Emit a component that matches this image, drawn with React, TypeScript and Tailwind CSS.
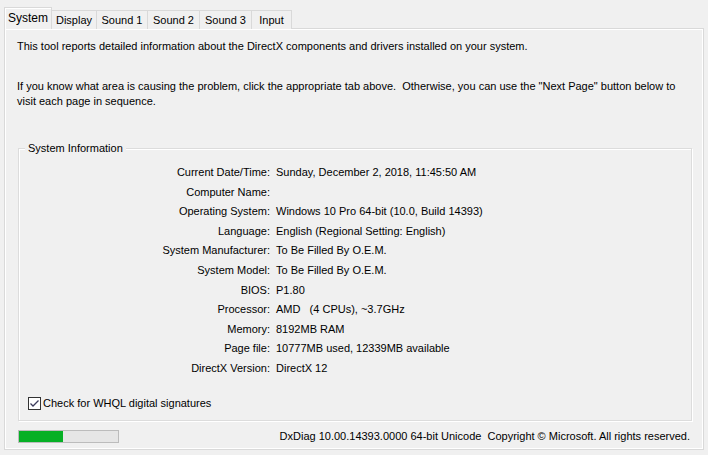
import React from "react";

const tabs: [string, string][] = [
  ["System", "w-[48px]"],
  ["Display", "w-[45px]"],
  ["Sound 1", "w-[51px]"],
  ["Sound 2", "w-[52px]"],
  ["Sound 3", "w-[52px]"],
  ["Input", "w-[40px]"],
];

const rows: [string, string][] = [
  ["Current Date/Time:", "Sunday, December 2, 2018, 11:45:50 AM"],
  ["Computer Name:", ""],
  ["Operating System:", "Windows 10 Pro 64-bit (10.0, Build 14393)"],
  ["Language:", "English (Regional Setting: English)"],
  ["System Manufacturer:", "To Be Filled By O.E.M."],
  ["System Model:", "To Be Filled By O.E.M."],
  ["BIOS:", "P1.80"],
  ["Processor:", "AMD   (4 CPUs), ~3.7GHz"],
  ["Memory:", "8192MB RAM"],
  ["Page file:", "10777MB used, 12339MB available"],
  ["DirectX Version:", "DirectX 12"],
];

const App = () => {
  return (
    <div
      className="w-[708px] h-[455px] bg-[#f0f0f0] text-black text-[11px] leading-[15px] pt-[7px] px-[4px] overflow-hidden"
      style={{ fontFamily: '"Liberation Sans", Arial, sans-serif' }}
    >
      {/* tab strip */}
      <div className="relative z-10 flex items-end h-[22px] -mb-px">
        {tabs.map(([t, w], i) =>
          i === 0 ? (
            <div
              key={t}
              className={`${w} h-[22px] border border-b-0 border-[#d9d9d9] bg-[#f0f0f0] shadow-[inset_1px_1px_0_#fff] flex items-center justify-center text-[12px] pb-[1px]`}
            >
              {t}
            </div>
          ) : (
            <div
              key={t}
              className={`${w} h-[19px] border border-l-0 border-b-0 border-[#d9d9d9] bg-[#f0f0f0] flex items-center justify-center`}
            >
              {t}
            </div>
          )
        )}
      </div>

      {/* panel */}
      <div className="h-[422px] border border-[#d9d9d9] shadow-[inset_1px_1px_0_#fff,inset_-1px_-1px_0_#fff] pt-[10px]">
        <p className="pl-[12px]">
          This tool reports detailed information about the DirectX components and drivers installed on your system.
        </p>
        <p className="pl-[12px] pr-[20px] mt-[25px]">
          If you know what area is causing the problem, click the appropriate tab above.&nbsp; Otherwise, you can use the "Next Page" button below to visit each page in sequence.
        </p>

        {/* group box */}
        <div className="relative ml-[13px] mr-[11px] mt-[39px] h-[273px] border border-[#dcdcdc] shadow-[inset_1px_1px_0_#fff,1px_1px_0_#fff] pt-[14px]">
          <span className="absolute left-[6px] top-[-8px] bg-[#f0f0f0] px-[3px]">System Information</span>
          <div className="grid grid-cols-[251px_1fr] gap-x-[6px]">
            {rows.map(([k, v]) => (
              <React.Fragment key={k}>
                <div className="text-right leading-[19.6px] whitespace-nowrap">{k}</div>
                <div className="leading-[19.6px] whitespace-pre">{v}</div>
              </React.Fragment>
            ))}
          </div>
          <label className="flex items-center gap-[2px] ml-[9px] mt-[17px]">
            <span className="w-[13px] h-[13px] border border-[#333] bg-white flex items-center justify-center">
              <svg width="11" height="11" viewBox="0 0 11 11">
                <path d="M1.5 5.5 L4 8 L9.5 2.5" fill="none" stroke="#3b3b5c" strokeWidth="1.3" />
              </svg>
            </span>
            <span>Check for WHQL digital signatures</span>
          </label>
        </div>

        {/* footer */}
        <div className="flex items-center justify-between ml-[13px] mr-[13px] mt-[8px]">
          <div className="w-[101px] h-[13px] border border-[#bcbcbc] bg-[#e6e6e6]">
            <div className="h-full bg-[#06b025]" style={{ width: 44 }} />
          </div>
          <span className="whitespace-pre">DxDiag 10.00.14393.0000 64-bit Unicode  Copyright © Microsoft. All rights reserved.</span>
        </div>
      </div>
    </div>
  );
};

export default App;
